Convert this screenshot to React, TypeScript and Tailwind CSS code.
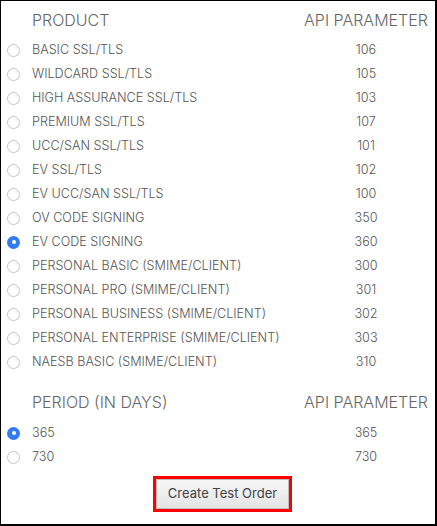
import React from "react";

const products: [string, string, boolean][] = [
  ["BASIC SSL/TLS", "106", false],
  ["WILDCARD SSL/TLS", "105", false],
  ["HIGH ASSURANCE SSL/TLS", "103", false],
  ["PREMIUM SSL/TLS", "107", false],
  ["UCC/SAN SSL/TLS", "101", false],
  ["EV SSL/TLS", "102", false],
  ["EV UCC/SAN SSL/TLS", "100", false],
  ["OV CODE SIGNING", "350", false],
  ["EV CODE SIGNING", "360", true],
  ["PERSONAL BASIC (SMIME/CLIENT)", "300", false],
  ["PERSONAL PRO (SMIME/CLIENT)", "301", false],
  ["PERSONAL BUSINESS (SMIME/CLIENT)", "302", false],
  ["PERSONAL ENTERPRISE (SMIME/CLIENT)", "303", false],
  ["NAESB BASIC (SMIME/CLIENT)", "310", false],
];

const periods: [string, string, boolean][] = [
  ["365", "365", true],
  ["730", "730", false],
];

function Radio({ checked }: { checked: boolean }) {
  if (checked) {
    return (
      <div className="w-[13px] h-[13px] rounded-full bg-[#2f7cf6] flex items-center justify-center shrink-0">
        <div className="w-[4px] h-[4px] rounded-full bg-white" />
      </div>
    );
  }
  return <div className="w-[13px] h-[13px] rounded-full border border-[#c4c4c4] bg-white shrink-0" />;
}

function Row({ label, value, checked }: { label: string; value: string; checked: boolean }) {
  return (
    <div className="flex items-center h-6">
      <div className="ml-[6px] mr-[12px]">
        <Radio checked={checked} />
      </div>
      <div className="flex-1 text-[12.6px] font-light text-[#555] whitespace-nowrap">{label}</div>
      <div className="w-[138px] text-center text-[12.6px] font-light text-[#555]">{value}</div>
    </div>
  );
}

function Header({ left }: { left: string }) {
  return (
    <div className="flex items-center h-full">
      <div className="flex-1 pl-[31px] text-[16px] font-light text-[#666] whitespace-nowrap">{left}</div>
      <div className="w-[138px] text-center text-[16px] font-light text-[#666] whitespace-nowrap">API PARAMETER</div>
    </div>
  );
}

export default function App() {
  return (
    <div
      className="w-[437px] h-[526px] bg-white border-l border-t border-r-2 border-b-2 border-black flex flex-col"
      style={{ fontFamily: "Inter, 'Liberation Sans', sans-serif" }}
    >
      <div className="h-[37px]">
        <Header left="PRODUCT" />
      </div>
      {products.map(([l, v, c]) => (
        <Row key={l} label={l} value={v} checked={c} />
      ))}
      <div className="h-[47px] pt-[8px]">
        <Header left="PERIOD (IN DAYS)" />
      </div>
      {periods.map(([l, v, c]) => (
        <Row key={l} label={l} value={v} checked={c} />
      ))}
      <div className="mt-[7px] ml-[152px] flex">
        <div className="border-[3px] border-[#ff0000]">
          <button className="h-[30px] w-[133px] border border-[#bdbdbd] bg-gradient-to-b from-[#f7f7f7] to-[#e4e4e4] text-[13px] text-[#444] flex items-center justify-center">
            Create Test Order
          </button>
        </div>
      </div>
    </div>
  );
}
